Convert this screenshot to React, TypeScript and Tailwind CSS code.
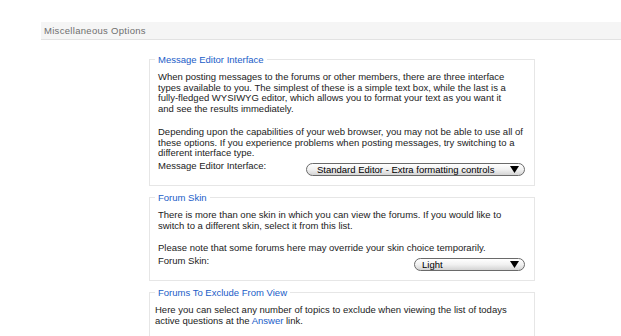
import React from "react";

function Group({ title, children, className = "" }: { title: string; children: React.ReactNode; className?: string }) {
  return (
    <fieldset className={`border border-[#e6e6e6] pl-[5px] pr-[9px] pt-[7px] pb-[9px] ${className}`}>
      <legend className="px-[3px] leading-[11px] text-[#1a5dc8]">{title}</legend>
      {children}
    </fieldset>
  );
}

function FakeSelect({ value, className }: { value: string; className: string }) {
  return (
    <div
      className={`mt-[3px] flex h-[13px] items-center justify-between rounded-full border border-[#6a6a6a] bg-gradient-to-b from-white via-[#f1f1f1] to-[#d4d4d4] pr-[5px] leading-[11px] text-black ${className}`}
    >
      <span>{value}</span>
      <svg width="9" height="7" viewBox="0 0 9 7">
        <polygon points="0,0 9,0 4.5,7" fill="#000" />
      </svg>
    </div>
  );
}

export default function App() {
  return (
    <div className="min-h-screen bg-white pt-[22px] font-['Liberation_Sans',Arial,sans-serif] text-[9.5px] text-[#222]">
      {/* Section header */}
      <div className="ml-[41px] h-[18px] border-b border-[#e2e2e2] bg-[#f5f5f5] pl-[3px] leading-[17px] tracking-[0.3px] text-[#6f6f6f]">
        Miscellaneous Options
      </div>

      <div className="ml-[149px] mt-[14px] w-[386px]">
        {/* Message Editor Interface */}
        <Group title="Message Editor Interface">
          <p className="whitespace-nowrap pl-[3px] leading-[10.7px]">
            When posting messages to the forums or other members, there are three interface
            <br />
            types available to you. The simplest of these is a simple text box, while the last is a
            <br />
            fully-fledged WYSIWYG editor, which allows you to format your text as you want it
            <br />
            and see the results immediately.
          </p>
          <p className="mt-[12px] whitespace-nowrap pl-[3px] leading-[10.7px]">
            Depending upon the capabilities of your web browser, you may not be able to use all of
            <br />
            these options. If you experience problems when posting messages, try switching to a
            <br />
            different interface type.
          </p>
          <div className="mt-[1px] flex items-start justify-between">
            <span className="pl-[3px] leading-[11px]">Message Editor Interface:</span>
            <FakeSelect value="Standard Editor - Extra formatting controls" className="w-[219px] pl-[10px]" />
          </div>
        </Group>

        {/* Forum Skin */}
        <Group title="Forum Skin" className="mt-[6px]">
          <p className="whitespace-nowrap pl-[3px] leading-[10.7px]">
            There is more than one skin in which you can view the forums. If you would like to
            <br />
            switch to a different skin, select it from this list.
          </p>
          <p className="mt-[12px] whitespace-nowrap pl-[3px] leading-[10.7px]">
            Please note that some forums here may override your skin choice temporarily.
          </p>
          <div className="mt-[1px] flex items-start justify-between">
            <span className="pl-[3px] leading-[11px]">Forum Skin:</span>
            <FakeSelect value="Light" className="w-[111px] pl-[7px]" />
          </div>
        </Group>

        {/* Forums To Exclude From View */}
        <Group title="Forums To Exclude From View" className="mt-[6px] pb-[20px]">
          <p className="whitespace-nowrap leading-[10.7px]">
            Here you can select any number of topics to exclude when viewing the list of todays
            <br />
            active questions at the <span className="text-[#1a5dc8]">Answer</span> link.
          </p>
        </Group>
      </div>
    </div>
  );
}
